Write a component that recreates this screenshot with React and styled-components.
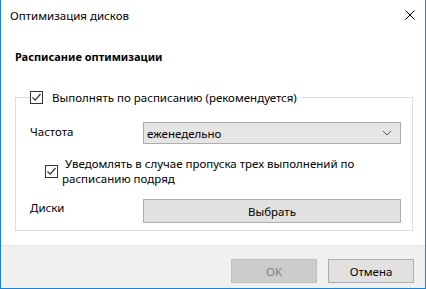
import React from "react"
import styled, { createGlobalStyle } from "styled-components"

const Global = createGlobalStyle`
  html, body {
    margin: 0;
    padding: 0;
    background: #ffffff;
  }
  * {
    box-sizing: border-box;
  }
`

const Window = styled.div`
  width: 426px;
  height: 289px;
  border: 1px solid #1883d7;
  border-top: none;
  display: flex;
  flex-direction: column;
  font-family: "Noto Sans", "DejaVu Sans", sans-serif;
  font-size: 11.5px;
  color: #000;
  background: #fff;
`

const TitleBar = styled.div`
  height: 30px;
  display: flex;
  align-items: center;
  justify-content: space-between;
  padding-left: 9px;
  padding-right: 10px;
`

const Title = styled.span`
  font-size: 11.5px;
`

const Close = styled.svg`
  width: 10px;
  height: 10px;
`

const Body = styled.div`
  flex: 1;
  padding: 18px 12px 0 14px;
`

const Heading = styled.div`
  font-weight: bold;
  font-size: 11px;
  height: 17px;
  line-height: 17px;
  margin-bottom: 25px;
`

const Group = styled.fieldset`
  margin: 0;
  padding: 18px 11px 7px 14px;
  border: 1px solid #dcdcdc;
`

const Legend = styled.legend`
  padding: 0 4px 0 0;
  margin-left: 0;
  display: flex;
  align-items: center;
  gap: 9px;
  height: 14px;
`

const Box = styled.span`
  width: 13px;
  height: 13px;
  border: 1px solid #333;
  background: #fff;
  display: inline-flex;
  align-items: center;
  justify-content: center;
  flex: none;
`

const Row = styled.div`
  display: flex;
  align-items: center;
  margin-bottom: ${(p) => p.$gap || 0}px;
`

const Label = styled.div`
  width: 113px;
  align-self: flex-start;
  padding-top: ${(p) => p.$pad || 0}px;
`

const Select = styled.div`
  flex: 1;
  height: 22px;
  background: #e5e5e5;
  border: 1px solid #adadad;
  display: flex;
  align-items: center;
  justify-content: space-between;
  padding: 0 8px 0 3px;
`

const Notify = styled.div`
  display: flex;
  align-items: center;
  margin-left: 15px;
  gap: 4px;
`

const NotifyText = styled.div`
  line-height: 15px;
  white-space: pre;
`

const Button = styled.div`
  height: ${(p) => p.$h || 24}px;
  width: ${(p) => (p.$w ? p.$w + "px" : "auto")};
  flex: ${(p) => (p.$w ? "none" : 1)};
  display: flex;
  align-items: center;
  justify-content: center;
  background: ${(p) => (p.$disabled ? "#cccccc" : "#e1e1e1")};
  border: 1px solid ${(p) => (p.$disabled ? "#bfbfbf" : "#adadad")};
  color: ${(p) => (p.$disabled ? "#838383" : "#000")};
`

const Footer = styled.div`
  height: 43px;
  background: #f0f0f0;
  border-top: 1px solid #e5e5e5;
  display: flex;
  justify-content: flex-end;
  align-items: flex-start;
  gap: 11px;
  padding: 13px 11px 0 0;
`

function Check() {
  return (
    <Box>
      <svg width="11" height="11" viewBox="0 0 11 11">
        <path d="M1.5 5.5 L4.2 8.2 L9.5 2" fill="none" stroke="#333" strokeWidth="1.2" />
      </svg>
    </Box>
  )
}

function Chevron() {
  return (
    <svg width="10" height="6" viewBox="0 0 10 6">
      <path d="M1 1 L5 5 L9 1" fill="none" stroke="#555" strokeWidth="1" />
    </svg>
  )
}

export default function App() {
  return (
    <>
      <Global />
      <Window>
        <TitleBar>
          <Title>Оптимизация дисков</Title>
          <Close viewBox="0 0 10 10">
            <path d="M0.5 0.5 L9.5 9.5 M9.5 0.5 L0.5 9.5" stroke="#000" strokeWidth="1" />
          </Close>
        </TitleBar>
        <Body>
          <Heading>Расписание оптимизации</Heading>
          <Group>
            <Legend>
              <Check />
              Выполнять по расписанию (рекомендуется)
            </Legend>
            <Row $gap={12}>
              <Label $pad={2}>Частота</Label>
              <Select>
                еженедельно
                <Chevron />
              </Select>
            </Row>
            <Row $gap={13}>
              <Notify>
                <Check />
                <NotifyText>{" Уведомлять в случае пропуска трех выполнений по\nрасписанию подряд"}</NotifyText>
              </Notify>
            </Row>
            <Row>
              <Label $pad={1}>Диски</Label>
              <Button>Выбрать</Button>
            </Row>
          </Group>
        </Body>
        <Footer>
          <Button $w={86} $disabled>OK</Button>
          <Button $w={86}>Отмена</Button>
        </Footer>
      </Window>
    </>
  )
}
